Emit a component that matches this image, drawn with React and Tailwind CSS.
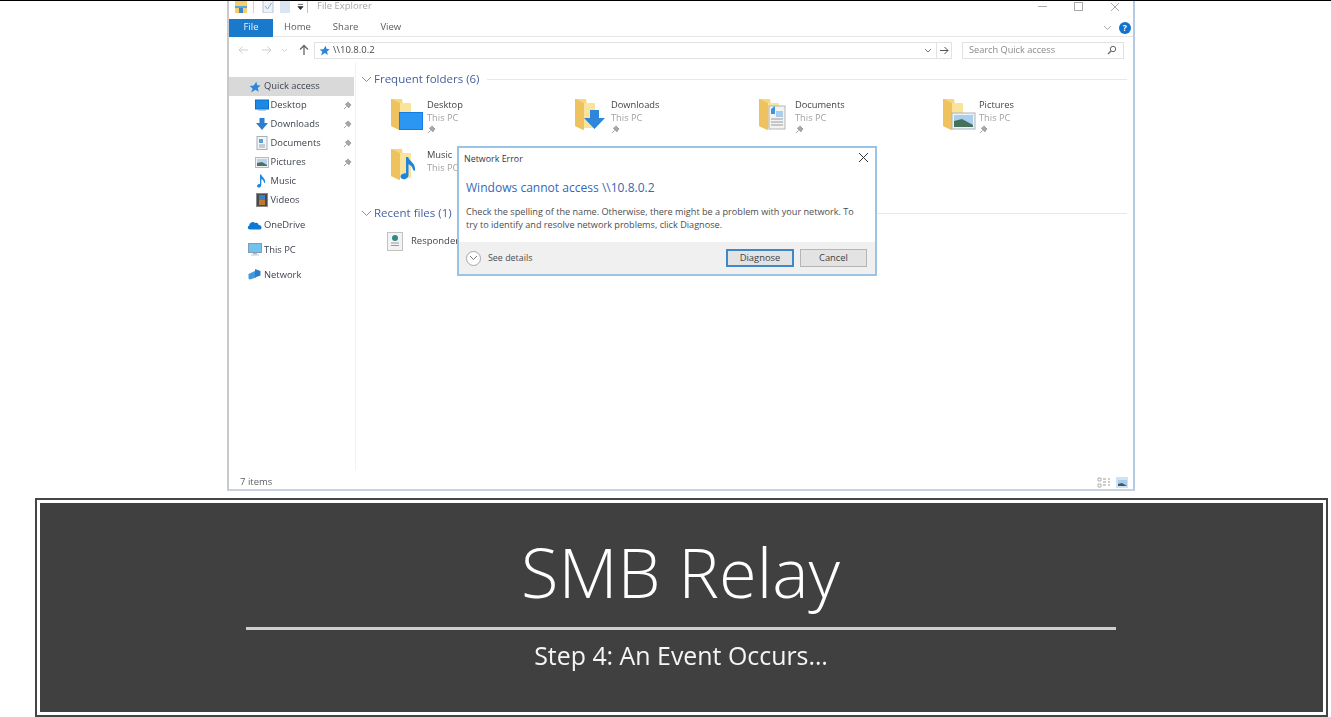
const FONT = "font-['Open_Sans','Noto_Sans',sans-serif]";

const Pin = ({ className = "" }) => (
  <svg width="9" height="9" viewBox="0 0 10 10" className={className}>
    <path d="M5.5 1 L9 4.5 L7.8 5 L6.6 7.6 L2.6 3.6 L5 2.2 Z M4 6 L1 9" fill="#a8a8a8" stroke="#9a9a9a" strokeWidth="1" />
  </svg>
);

const Star = ({ size = 12 }) => (
  <svg width={size} height={size} viewBox="0 0 12 12">
    <path d="M7.3 0.8 L8.2 4.2 L11.6 4.6 L8.8 7 L9.6 10.8 L6.4 8.8 L2.2 11.4 L3.6 7.4 L0.6 5 L4.8 4.6 Z" fill="#2f86d8" />
  </svg>
);

const BigFolder = ({ children }) => (
  <svg width="36" height="36" viewBox="0 0 36 36">
    <path d="M1 2 H12 L13 8 H21 V31 H10 L9 33 L1 29 Z" fill="#f6d67e" />
    <path d="M1 2 L10 6 V33 L1 29 Z" fill="#eec35f" />
    <path d="M10 6 H21 V31 H10 Z" fill="#fae39b" />
    {children}
  </svg>
);

const overlays = {
  Desktop: (
    <>
      <rect x="9" y="15" width="24" height="18" fill="#0f7fe6" />
      <rect x="10" y="16" width="22" height="16" fill="#2b97f3" />
    </>
  ),
  Downloads: (
    <path d="M16 13 H25 V21 H31 L20.5 32 L10 21 H16 Z" fill="#2d86dc" />
  ),
  Documents: (
    <>
      <rect x="11" y="9" width="16" height="23" fill="#f3f3f3" stroke="#b5b5b5" />
      <path d="M13 12 L17 9 L17 17 H13 Z" fill="#3b95e0" />
      <rect x="18" y="14" width="7" height="6" fill="#a9cdea" />
      <path d="M13 22 H25 M13 25 H25 M13 28 H25" stroke="#9a9a9a" />
    </>
  ),
  Pictures: (
    <>
      <rect x="10" y="16" width="23" height="16" fill="#eef2f5" stroke="#a9b4bd" />
      <rect x="12" y="18" width="19" height="12" fill="#a8cff0" />
      <path d="M12 24 L20 22 L31 28 V30 H12 Z" fill="#46705c" />
    </>
  ),
  Music: (
    <path d="M16 10 H18 C20 15 26 16 25 24 L23 23 C23 20 20 18 18.5 17 V28 C18.5 31 15 33 12.5 32 C10 31 10 28 12.5 27 C14 26 15 26 16 26.5 Z" fill="#1f84de" />
  ),
};

const Folder = ({ name, pinned = true }) => (
  <div className="flex h-[44px] items-start">
    <div className="mt-[-2px] mr-[1px] h-[36px] w-[36px] shrink-0">
      <BigFolder>{overlays[name]}</BigFolder>
    </div>
    <div className="text-[9.3px] leading-[12.5px]">
      <div className="text-[#3f3f46]">{name}</div>
      <div className="text-[#a2a2a2]">This PC</div>
      {pinned && <Pin className="mt-[1px]" />}
    </div>
  </div>
);

const NavIcon = ({ name }) => {
  switch (name) {
    case "Desktop":
      return (
        <svg width="14" height="12" viewBox="0 0 14 12">
          <rect x="0.5" y="1" width="13" height="9" fill="#1e88e5" stroke="#0f6fc6" />
          <rect x="3" y="10.5" width="8" height="1" fill="#79a8d4" />
        </svg>
      );
    case "Downloads":
      return (
        <svg width="14" height="14" viewBox="0 0 14 14">
          <path d="M4.5 1 H9.5 V6 H13 L7 13 L1 6 H4.5 Z" fill="#2a7fd0" />
        </svg>
      );
    case "Documents":
      return (
        <svg width="12" height="14" viewBox="0 0 12 14">
          <rect x="1" y="0.5" width="10" height="13" fill="#f2f5f8" stroke="#a8b0b8" />
          <rect x="3" y="3" width="4" height="4" fill="#5ca0d8" />
          <path d="M3 9 H9 M3 11 H9" stroke="#9aa4ad" />
        </svg>
      );
    case "Pictures":
      return (
        <svg width="14" height="11" viewBox="0 0 14 11">
          <rect x="0.5" y="0.5" width="13" height="10" fill="#eef1f4" stroke="#b3bbc2" />
          <rect x="2" y="2" width="10" height="7" fill="#b7d4ec" />
          <path d="M2 6 L7 5 L12 8 V9 H2 Z" fill="#4f6f64" />
        </svg>
      );
    case "Music":
      return (
        <svg width="11" height="14" viewBox="0 0 11 14">
          <path d="M4 0.5 H5.2 C6 3.5 10 4.5 9 9 L8 8.5 C8 6.5 6.5 5.5 5.3 5 V11 C5.3 13 3.4 14 2 13.4 C0.6 12.8 0.8 11 2 10.4 C2.8 10 3.5 10 4 10.2 Z" fill="#1f86e0" />
        </svg>
      );
    case "Videos":
      return (
        <svg width="12" height="14" viewBox="0 0 12 14">
          <rect x="0.5" y="0.5" width="11" height="13" fill="#4a4a4a" stroke="#8a8a8a" />
          <rect x="3" y="2" width="6" height="5" fill="#3d7fc4" />
          <rect x="3" y="7" width="6" height="5" fill="#c07a2c" />
        </svg>
      );
    case "OneDrive":
      return (
        <svg width="15" height="10" viewBox="0 0 15 10">
          <path d="M3 9.5 C0.5 9.5 0 6.5 2.2 5.6 C2.6 2.6 6 1 8 3 C10 2.2 11.8 3.6 11.6 5 C14 5 15 7 14.4 8.2 C14 9.2 13.2 9.5 12.5 9.5 Z" fill="#0f78d4" />
        </svg>
      );
    case "This PC":
      return (
        <svg width="14" height="13" viewBox="0 0 14 13">
          <rect x="0.5" y="0.5" width="13" height="9" fill="#6fc3ee" stroke="#7f9db5" />
          <rect x="5" y="10" width="4" height="1.5" fill="#a9bac8" />
          <rect x="3" y="11.5" width="8" height="1" fill="#c0ccd6" />
        </svg>
      );
    default:
      return (
        <svg width="13" height="13" viewBox="0 0 13 13">
          <path d="M0.5 6 L8 2.5 L8 9.5 L2 11.5 C0.8 11.5 0.5 10.5 0.5 9.5 Z" fill="#3f9ade" />
          <path d="M7 1 L12.5 3 V7.5 L7 9.5 Z" fill="#2c7fc6" />
        </svg>
      );
  }
};

const NavRow = ({ name, pinned }) => (
  <div className="flex h-[18.9px] items-center pl-[24px] pr-[3px]">
    <div className="flex w-[17.5px] shrink-0 items-center justify-center">
      <NavIcon name={name} />
    </div>
    <span className="grow text-[9.4px] text-[#3f4450]">{name}</span>
    {pinned && <Pin />}
  </div>
);

const TopNavRow = ({ name, className }) => (
  <div className={`flex h-[19px] items-center pl-[18px] ${className}`}>
    <div className="mr-[2px] flex w-[15px] shrink-0 items-center justify-center">
      <NavIcon name={name} />
    </div>
    <span className="text-[9.4px] text-[#3f4450]">{name}</span>
  </div>
);

const Section = ({ title, rule = true }) => (
  <div className="flex h-[14px] items-center">
    <svg width="11" height="7" viewBox="0 0 11 7" className="mr-[2px]">
      <path d="M1 1 L5.5 5.5 L10 1" stroke="#8b9199" fill="none" strokeWidth="1" />
    </svg>
    <span className="text-[11.5px] text-[#46619f]">{title}</span>
    {rule && <div className="ml-[7px] h-px grow bg-[#e8e8e8]" />}
  </div>
);

const Dialog = () => (
  <div className="absolute top-[145px] left-[228px] flex h-[130px] w-[420px] flex-col border-2 border-[#9ac3e6] bg-white">
    <div className="flex h-[21px] items-center justify-between pt-[1px] pl-[5px] pr-[6px]">
      <span className="text-[8.9px] text-[#33373d]">Network Error</span>
      <svg width="11" height="11" viewBox="0 0 11 11" className="mt-[-3px]">
        <path d="M1 1 L10 10 M10 1 L1 10" stroke="#333" strokeWidth="1" />
      </svg>
    </div>
    <div className="pt-[11px] pl-[7px] text-[12.05px] leading-[16px] text-[#3568b5]">
      Windows cannot access \\10.8.0.2
    </div>
    <div className="pt-[10px] pl-[7px] text-[9.15px] leading-[12.5px] text-[#4a4d52]">
      <div>Check the spelling of the name. Otherwise, there might be a problem with your network. To</div>
      <div>try to identify and resolve network problems, click Diagnose.</div>
    </div>
    <div className="mt-auto flex h-[32px] items-center bg-[#f0f0f0] pl-[7px] pr-[8px]">
      <div className="mr-[7px] flex h-[15px] w-[15px] items-center justify-center rounded-full border border-[#a6a6a6] bg-white">
        <svg width="9" height="6" viewBox="0 0 9 6">
          <path d="M1 1 L4.5 4.5 L8 1" stroke="#777" fill="none" />
        </svg>
      </div>
      <span className="text-[8.9px] text-[#4a4d52]">See details</span>
      <div className="ml-auto flex h-[18px] w-[68px] items-center justify-center border-2 border-[#3f87c8] bg-[#e3e3e3] text-[9.4px] text-[#3f4246]">
        Diagnose
      </div>
      <div className="ml-[6px] flex h-[18px] w-[67px] items-center justify-center border border-[#b4b4b4] bg-[#e3e3e3] text-[9.4px] text-[#3f4246]">
        Cancel
      </div>
    </div>
  </div>
);

const Window = () => (
  <div className="relative flex h-[490px] w-[908px] flex-col border-r-2 border-b-2 border-l-2 border-r-[#b4c9e2] border-b-[#c9d2de] border-l-[#c9c9c9] bg-white blur-[0.4px]">
    {/* title bar: the top of it is cut off by the slide */}
    <div className="flex h-[18px] shrink-0 items-center pb-[7px] pl-[5px]">
      <svg width="14" height="12" viewBox="0 0 14 12">
        <rect x="1" y="0" width="12" height="12" fill="#f4cf6d" />
        <rect x="1" y="5" width="12" height="2" fill="#5aa5df" />
        <rect x="5" y="7" width="4" height="5" fill="#3f86c6" />
      </svg>
      <div className="ml-[5px] h-[12px] w-px bg-[#d0d0d0]" />
      <svg width="12" height="13" viewBox="0 0 12 13" className="ml-[8px]">
        <rect x="1" y="0" width="10" height="13" fill="#eef2f8" stroke="#b9c4d6" />
        <path d="M3 6 L5.5 9 L9.5 3" stroke="#8da5c9" fill="none" />
      </svg>
      <svg width="10" height="13" viewBox="0 0 10 13" className="ml-[6px]">
        <rect x="0" y="0" width="10" height="13" fill="#dbe4f2" />
      </svg>
      <svg width="7" height="8" viewBox="0 0 8 8" className="ml-[7px]">
        <path d="M1 1 H7 M1 3.5 H7 L4 7 Z" stroke="#333" fill="#333" strokeWidth="0.8" />
      </svg>
      <div className="ml-[3px] h-[12px] w-px bg-[#c4c4c4]" />
      <span className="ml-[9px] text-[9.5px] text-[#a8a8a8]">File Explorer</span>
      <div className="ml-auto flex items-center pr-[13px]">
        <div className="h-px w-[9px] bg-[#a9a9a9]" />
        <div className="ml-[27px] h-[9px] w-[9px] border border-[#a9a9a9]" />
        <svg width="10" height="10" viewBox="0 0 10 10" className="ml-[27px]">
          <path d="M1 1 L9 9 M9 1 L1 9" stroke="#a9a9a9" />
        </svg>
      </div>
    </div>
    {/* ribbon tabs */}
    <div className="flex h-[18px] shrink-0 items-center border-b border-[#e6e6e6]">
      <div className="flex h-[18px] w-[44px] items-center justify-center bg-[#1979ca] text-[9.5px] text-[#eaf3fb]">File</div>
      <div className="ml-[11px] text-[9.5px] text-[#565a60]">Home</div>
      <div className="ml-[22px] text-[9.5px] text-[#565a60]">Share</div>
      <div className="ml-[22px] text-[9.5px] text-[#565a60]">View</div>
      <div className="ml-auto flex items-center pr-[2px]">
        <svg width="9" height="6" viewBox="0 0 9 6">
          <path d="M1 1 L4.5 4.5 L8 1" stroke="#a9a9a9" fill="none" />
        </svg>
        <div className="ml-[7px] flex h-[12px] w-[12px] items-center justify-center rounded-full bg-[#0f72d0] text-[9px] font-bold text-white">?</div>
      </div>
    </div>
    {/* address row */}
    <div className="flex h-[25px] shrink-0 items-center pl-[8px] pr-[9px] pt-[1px]">
      <svg width="12" height="10" viewBox="0 0 12 10">
        <path d="M11 5 H2 M5.5 1.5 L2 5 L5.5 8.5" stroke="#cfcfcf" fill="none" />
      </svg>
      <svg width="12" height="10" viewBox="0 0 12 10" className="ml-[12px]">
        <path d="M1 5 H10 M6.5 1.5 L10 5 L6.5 8.5" stroke="#cfcfcf" fill="none" />
      </svg>
      <svg width="7" height="5" viewBox="0 0 7 5" className="ml-[8px]">
        <path d="M1 1 L3.5 3.5 L6 1" stroke="#cfcfcf" fill="none" />
      </svg>
      <svg width="12" height="12" viewBox="0 0 12 12" className="ml-[10px]">
        <path d="M6 11 V2 M2 5.5 L6 1.5 L10 5.5" stroke="#666" fill="none" strokeWidth="1.3" />
      </svg>
      <div className="ml-[4px] flex h-[17px] w-[638px] items-center border border-[#e2e2e2] pl-[4px] text-[9.5px] text-[#45484d]">
        <Star size={11} />
        <span className="ml-[3px]">\\10.8.0.2</span>
        <svg width="8" height="5" viewBox="0 0 8 5" className="mr-[4px] ml-auto">
          <path d="M1 1 L4 4 L7 1" stroke="#777" fill="none" />
        </svg>
        <div className="flex h-full w-[15px] items-center justify-center border-l border-[#e2e2e2]">
          <svg width="10" height="9" viewBox="0 0 10 9">
            <path d="M1 4.5 H9 M5.5 1 L9 4.5 L5.5 8" stroke="#555" fill="none" />
          </svg>
        </div>
      </div>
      <div className="ml-[10px] flex h-[17px] grow items-center justify-between border border-[#e2e2e2] pl-[6px] pr-[6px] text-[9.2px] text-[#8a8a8a]">
        <span>Search Quick access</span>
        <svg width="10" height="10" viewBox="0 0 10 10">
          <circle cx="6" cy="4" r="2.7" stroke="#666" fill="none" />
          <path d="M4 6 L1 9" stroke="#666" strokeWidth="1.3" />
        </svg>
      </div>
    </div>
    {/* main */}
    <div className="flex min-h-0 grow">
      <div className="flex w-[126px] shrink-0 flex-col pt-[15px]">
        <div className="flex h-[19px] w-[125px] items-center bg-[#d9d9d9] pl-[20px]">
          <Star size={12} />
          <span className="ml-[3px] text-[9.4px] text-[#3f4450]">Quick access</span>
        </div>
        <NavRow name="Desktop" pinned />
        <NavRow name="Downloads" pinned />
        <NavRow name="Documents" pinned />
        <NavRow name="Pictures" pinned />
        <NavRow name="Music" />
        <NavRow name="Videos" />
        <TopNavRow name="OneDrive" className="mt-[6px]" />
        <TopNavRow name="This PC" className="mt-[6px]" />
        <TopNavRow name="Network" className="mt-[6px]" />
      </div>
      <div className="flex grow flex-col border-l border-[#f1f1f1] pt-[10px] pl-[5px] pr-[6px]">
        <Section title="Frequent folders (6)" />
        <div className="mt-[13px] grid grid-cols-[184px_184px_184px_184px] pl-[29px]">
          <Folder name="Desktop" />
          <Folder name="Downloads" />
          <Folder name="Documents" />
          <Folder name="Pictures" />
          <div className="mt-[6px]"><Folder name="Music" pinned={false} /></div>
        </div>
        <div className="mt-[13px]"><Section title="Recent files (1)" /></div>
        <div className="mt-[12px] flex items-center pl-[26px]">
          <svg width="16" height="19" viewBox="0 0 16 19">
            <rect x="0.5" y="0.5" width="15" height="18" fill="#f3f3f3" stroke="#c2c2c2" />
            <circle cx="8" cy="6" r="3" fill="#2e8a8a" />
            <path d="M4 11 H12 M4 13.5 H12" stroke="#9a9a9a" />
          </svg>
          <span className="ml-[8px] text-[9.5px] text-[#3f4450]">Responder</span>
        </div>
      </div>
    </div>
    {/* status bar */}
    <div className="mt-[6px] flex h-[13px] shrink-0 items-center justify-between pl-[11px] pr-[5px] text-[9.5px] text-[#5a5e66]">
      <span>7 items</span>
      <div className="flex items-center">
        <svg width="14" height="11" viewBox="0 0 14 11">
          <path d="M1 1 H4 V4 H1 Z M1 7 H4 V10 H1 Z" fill="none" stroke="#b0b0b0" />
          <path d="M6 2 H9 M11 2 H13 M6 5 H9 M11 5 H13 M6 8 H9 M11 8 H13" stroke="#9a9a9a" />
        </svg>
        <div className="ml-[5px] flex h-[11px] w-[12px] items-center justify-center bg-[#cfe3f5]">
          <svg width="9" height="6" viewBox="0 0 9 6">
            <rect width="9" height="6" fill="#a7cdea" />
            <path d="M0 4 L4 3 L9 6 H0 Z" fill="#3e5a6a" />
          </svg>
        </div>
      </div>
    </div>
    <Dialog />
  </div>
);

export default function App() {
  return (
    <div className={`flex h-[717px] w-[1331px] flex-col overflow-hidden border-t border-black bg-white ${FONT}`}>
      <div className="h-[489px] shrink-0 pl-[227px]">
        <Window />
      </div>
      <div className="mt-[8px] ml-[35px] h-[219px] w-[1293px] shrink-0 border-2 border-[#454545] bg-white p-[3px] blur-[0.3px]">
        <div className="flex h-full flex-col items-center bg-[#404040]">
          <div className="mt-[25px] mr-[2px] text-[68.5px] leading-[88px] font-light text-white">SMB Relay</div>
          <div className="mt-[11px] mr-[2px] h-[3px] w-[870px] bg-[#cfcfcf]" />
          <div className="mt-[9px] mr-[1px] text-[24.9px] leading-[32px] text-[#f5f5f5]">Step 4: An Event Occurs…</div>
        </div>
      </div>
    </div>
  );
}
